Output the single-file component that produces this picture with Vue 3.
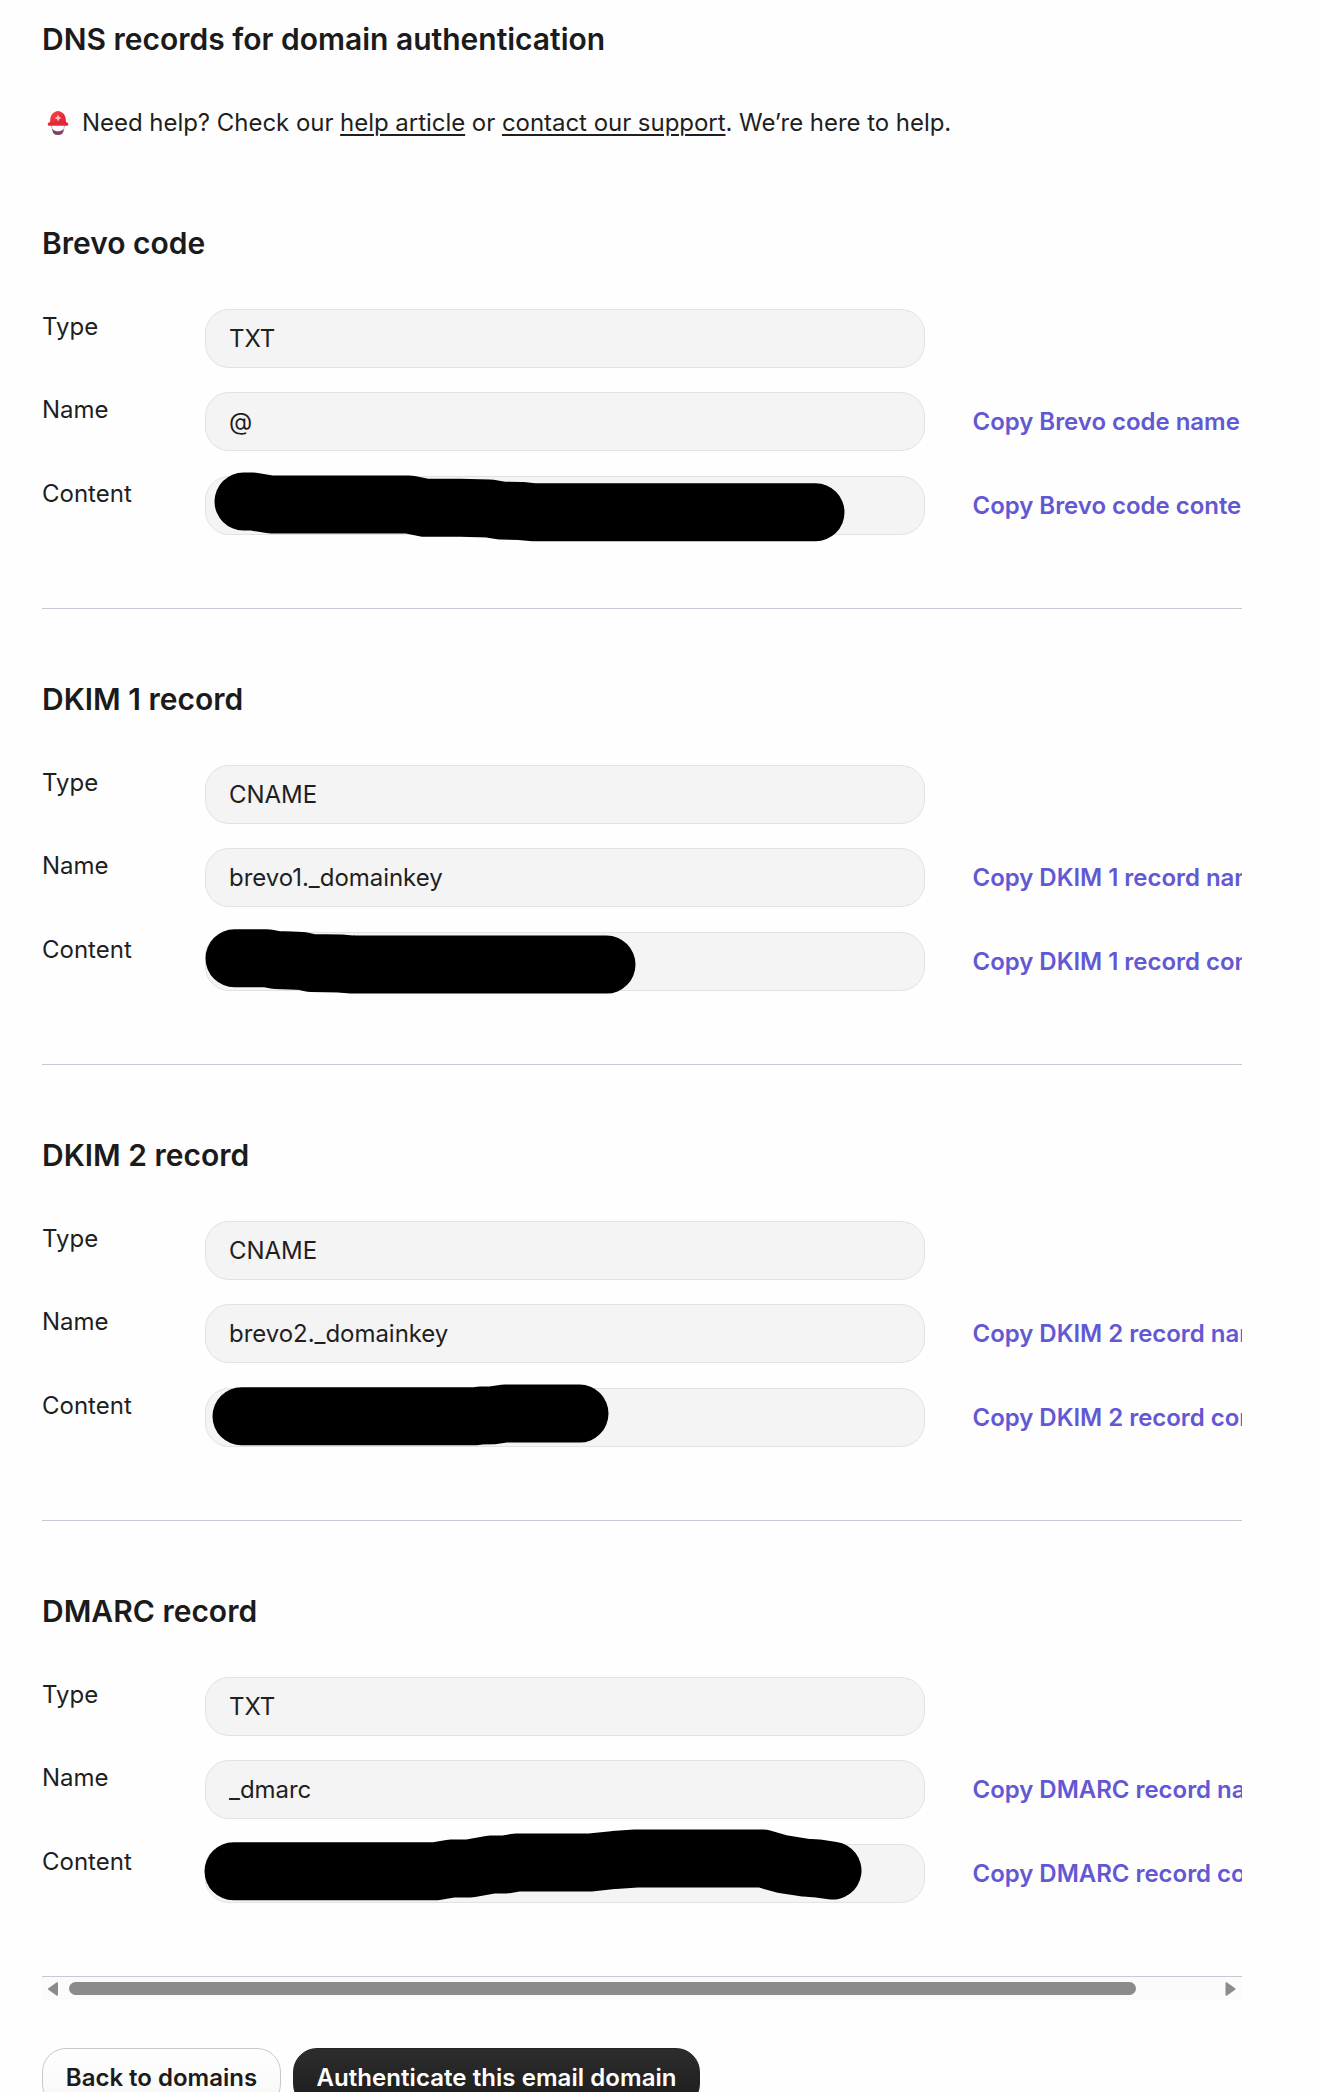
<script setup>
const records = [
  {
    title: 'Brevo code',
    type: 'TXT',
    name: '@',
    mask: '38.5,25.5 48,25.5 66,28.5 204,28.5 220,31.7 255,31.8 284,32.5 297,34.6 316,35 330,36.3 610.5,36.3',
  },
  {
    title: 'DKIM 1 record',
    type: 'CNAME',
    name: 'brevo1._domainkey',
    mask: '29.5,26.3 62,26.3 71,28 86,28.6 97,29 106,31 135,31.5 148,32.6 401.5,32.6',
  },
  {
    title: 'DKIM 2 record',
    type: 'CNAME',
    name: 'brevo2._domainkey',
    mask: '36.5,28.3 270,28.3 276,27.5 288,27.2 300,25.6 374.5,25.6',
  },
  {
    title: 'DMARC record',
    type: 'TXT',
    name: '_dmarc',
    mask: '28.5,27.3 230,27.3 246,24.6 265,24.4 286,20.6 301,20.4 311,18.6 384,18.6 409,16 431,14.5 558,14.5 577,20 600,23.6 613,24.5 627.5,26.6',
  },
]
</script>

<template>
  <main class="page">
    <h1 class="title">DNS records for domain authentication</h1>
    <p class="help">
      <svg class="helmet" viewBox="0 0 22 26" aria-hidden="true">
        <defs>
          <linearGradient id="shell" x1="0" y1="0" x2="1" y2="1">
            <stop offset="0" stop-color="#f5524c" />
            <stop offset="0.5" stop-color="#ec2c3c" />
            <stop offset="1" stop-color="#d81f3c" />
          </linearGradient>
        </defs>
        <path d="M4.200 14 Q4.300 18 6.400 21 M17.800 14 Q17.700 18 15.600 21" fill="none" stroke="#d3c3de" stroke-width="1.300" />
        <path d="M5.300 19 Q6.800 20.400 8.600 21 Q11 21.500 13.400 21 Q15.200 20.400 16.700 19 Q16.800 25 11 25 Q5.200 25 5.300 19Z" fill="#823d68" />
        <path d="M3 12 Q2.800 4 8.200 1.800 Q11 .2 13.800 1.800 Q19.200 4 19 12 L21 13 Q21.700 15.600 19.500 15.600 H2.500 Q.3 15.600 1 13Z" fill="url(#shell)" />
        <path d="M1 13 Q11 11.800 21 13 Q21.700 15.600 19.500 15.600 H2.500 Q.3 15.600 1 13Z" fill="#e6283a" />
        <path d="M11 6 V10 M9 8 H13" stroke="#ffe9ea" stroke-width="1.500" stroke-linecap="round" />
        <circle cx="11" cy="8" r=".6" fill="#f06a70" />
      </svg>
      <span>Need help? Check our <a href="#">help article</a> or <a href="#">contact our support</a>. We’re here to help.</span>
    </p>

    <div class="records">
      <section v-for="r in records" :key="r.title" class="record">
        <h2 class="title">{{ r.title }}</h2>
        <div class="rows">
          <div class="row">
            <span class="label">Type</span>
            <div class="field">{{ r.type }}</div>
          </div>
          <div class="row">
            <span class="label">Name</span>
            <div class="field">{{ r.name }}</div>
            <a class="copy">Copy {{ r.title }} name</a>
          </div>
          <div class="row">
            <span class="label">Content</span>
            <div class="field">
              <svg class="mask" width="720" height="60" viewBox="0 0 720 60"><polyline :points="r.mask" /></svg>
            </div>
            <a class="copy">Copy {{ r.title }} content</a>
          </div>
        </div>
      </section>
    </div>

    <div class="scrollbar">
      <svg width="12" height="14" viewBox="0 0 12 14"><path d="M10 1.200 V12.800 L2 7Z" /></svg>
      <div class="thumb"></div>
      <svg width="12" height="14" viewBox="0 0 12 14"><path d="M1.500 1.200 V12.800 L9.500 7Z" /></svg>
    </div>

    <div class="actions">
      <button class="btn">Back to domains</button>
      <button class="btn primary">Authenticate this email domain</button>
    </div>
  </main>
</template>

<style>
body {
  margin: 0;
  background: #fefefe;
}
</style>

<style scoped>
.page {
  box-sizing: border-box;
  width: 1318px;
  height: 2092px;
  overflow: hidden;
  padding: 21px 76px 0 42px;
  background: #fefefe;
  color: #1f1f1f;
  font: 400 24px/36px Inter, sans-serif;
}
.title {
  margin: 0;
  color: #1b1b1b;
  font-size: 30px;
  line-height: 36px;
  font-weight: 600;
}
.help {
  display: flex;
  align-items: center;
  margin: 48px 0 0;
  height: 36px;
  white-space: nowrap;
  letter-spacing: -0.04px;
}
.help a {
  color: inherit;
  text-decoration: underline;
  text-decoration-thickness: 2px;
  text-underline-offset: 3px;
}
.helmet {
  width: 22px;
  height: 26px;
  margin: -1px 13px 0 5px;
}
.records {
  margin-top: 12px;
  overflow: hidden;
}
.record {
  height: 383px;
  padding-top: 72px;
  border-bottom: 1px solid #c3cad3;
}
.rows {
  display: flex;
  flex-direction: column;
  margin-top: 48px;
}
.row {
  display: flex;
  height: 59px;
  margin-bottom: 24px;
  white-space: nowrap;
}
.row:last-child {
  margin-top: 1px;
}
.label {
  flex: 0 0 163px;
}
.field {
  position: relative;
  box-sizing: border-box;
  flex: 0 0 720px;
  padding: 0 23px;
  border: 1px solid #e2e2e2;
  border-radius: 24px;
  background: #f4f4f4;
  line-height: 58px;
  letter-spacing: -0.04px;
}
.mask {
  position: absolute;
  left: -1px;
  top: -1px;
  overflow: visible;
}
.mask polyline {
  fill: none;
  stroke: #000;
  stroke-width: 58px;
  stroke-linecap: round;
  stroke-linejoin: round;
}
.copy {
  margin-left: 47.5px;
  color: #6358d4;
  font-weight: 600;
  line-height: 59px;
  letter-spacing: -0.03px;
}
.scrollbar {
  box-sizing: border-box;
  display: flex;
  align-items: center;
  height: 23px;
  padding: 0 5px;
  background: #fbfbfb;
}
.scrollbar path {
  fill: #8b8b8b;
  stroke: #8b8b8b;
  stroke-width: 2;
  stroke-linejoin: round;
}
.thumb {
  width: 1067px;
  height: 13px;
  margin: 0 auto 0 10px;
  border-radius: 7px;
  background: #8b8b8b;
}
.actions {
  display: flex;
  gap: 12px;
  margin-top: 48px;
}
.btn {
  box-sizing: border-box;
  width: 239px;
  height: 60px;
  padding: 0;
  border: 1px solid #c9c9c9;
  border-radius: 24px;
  background: linear-gradient(#fefefe, #f7f7f7);
  color: #1b1b1b;
  font: 600 24px/58px Inter, sans-serif;
  white-space: nowrap;
}
.btn.primary {
  width: 407px;
  border-color: #262626;
  background: linear-gradient(#2d2d2d, #1b1b1b);
  color: #fff;
  letter-spacing: 0.06px;
}
</style>
